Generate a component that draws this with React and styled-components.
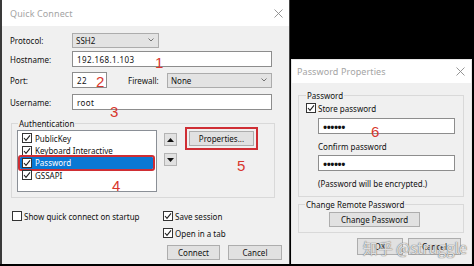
import React from "react";
import styled, { createGlobalStyle } from "styled-components";

const Global = createGlobalStyle`
  html, body { margin: 0; padding: 0; background: #000; }
  body {
    width: 474px; height: 266px; overflow: hidden;
    font-family: "Noto Sans", "Liberation Sans", sans-serif;
    font-size: 8px; color: #111;
  }
  #root { width: 474px; height: 266px; }
`;

const Screen = styled.div`
  position: relative;
  display: flex;
  width: 474px;
  height: 266px;
  background: #000;
  overflow: hidden;
`;

const Window = styled.div`
  position: relative;
  display: flex;
  flex-direction: column;
  box-sizing: border-box;
  flex: none;
  width: ${(p) => p.$w}px;
  height: ${(p) => p.$h}px;
  background: #f0f0f0;
  border-left: ${(p) => p.$bl};
  border-right: ${(p) => p.$br};
  border-top: ${(p) => p.$bt || "none"};
  margin-left: ${(p) => p.$ml || 0}px;
`;

const TitleBar = styled.div`
  display: flex;
  align-items: center;
  justify-content: space-between;
  height: ${(p) => p.$h}px;
  flex: none;
  background: #fff;
  padding: 0 ${(p) => p.$pr}px 0 ${(p) => p.$pl}px;
`;

const Title = styled.span`
  font-size: 9px;
  color: #a4a4a4;
  letter-spacing: 0.1px;
`;

const RightColumn = styled.div`
  display: flex;
  flex-direction: column;
  width: 184px;
  flex: none;
`;

const BlackGap = styled.div`
  height: 59px;
  flex: none;
  background: #000;
`;

const Body = styled.div`
  display: flex;
  flex-direction: column;
  padding: ${(p) => p.$pad};
`;

const FormRow = styled.div`
  display: flex;
  align-items: center;
  height: 16px;
  margin-top: ${(p) => p.$mt || 0}px;
`;

const Label = styled.span`
  display: inline-block;
  width: ${(p) => p.$w || 62}px;
  margin-left: ${(p) => p.$ml || 0}px;
  flex: none;
  white-space: nowrap;
`;

const TextInput = styled.div`
  box-sizing: border-box;
  width: ${(p) => p.$w}px;
  height: ${(p) => p.$h || 16}px;
  margin-left: ${(p) => p.$ml || 0}px;
  margin-top: ${(p) => p.$mt || 0}px;
  flex: none;
  background: #fff;
  border: 1px solid #8d8d8d;
  padding-left: 4px;
  display: flex;
  align-items: center;
  white-space: nowrap;
  font-size: ${(p) => (p.$dots ? "11px" : "8px")};
  font-weight: ${(p) => (p.$dots ? 700 : 400)};
  letter-spacing: ${(p) => (p.$dots ? "-0.5px" : "0.4px")};
`;

const Select = styled.div`
  box-sizing: border-box;
  width: ${(p) => p.$w}px;
  height: 15px;
  flex: none;
  background: #e3e3e3;
  border: 1px solid #acacac;
  display: flex;
  align-items: center;
  justify-content: space-between;
  padding: 0 4px 0 3px;
`;

const Chevron = () => (
  <svg width="6" height="4" viewBox="0 0 6 4">
    <path d="M0.5 0.5 L3 3 L5.5 0.5" fill="none" stroke="#666" strokeWidth="0.9" />
  </svg>
);

const CloseIcon = () => (
  <svg width="9" height="9" viewBox="0 0 9 9">
    <path d="M0.5 0.5 L8.5 8.5 M8.5 0.5 L0.5 8.5" stroke="#8a8a8a" strokeWidth="0.9" />
  </svg>
);

const Group = styled.fieldset`
  box-sizing: border-box;
  width: ${(p) => p.$w}px;
  margin: ${(p) => p.$m};
  padding: ${(p) => p.$pad};
  border: 1px solid #d9d9d9;
  min-width: 0;
`;

const Legend = styled.legend`
  padding: 0 1px;
  margin-left: ${(p) => p.$ml || 0}px;
  line-height: 11px;
  font-size: 8px;
  color: #111;
`;

const GroupContent = styled.div`
  display: flex;
  align-items: flex-start;
`;

const ListBox = styled.div`
  box-sizing: border-box;
  width: 140px;
  height: 62px;
  flex: none;
  background: #fff;
  border: 1px solid #8a8f96;
  padding: 1px 3px 0 2px;
  display: flex;
  flex-direction: column;
`;

const ListItem = styled.div`
  display: flex;
  align-items: center;
  gap: 3px;
  height: 12.4px;
  padding-left: 2px;
  border-radius: 1px;
  background: ${(p) => (p.$selected ? "#0a78d4" : "transparent")};
  color: ${(p) => (p.$selected ? "#fff" : "#111")};
  outline: ${(p) => (p.$selected ? "2px solid #cf2e34" : "none")};
  outline-offset: 0px;
`;

const Box = styled.span`
  box-sizing: border-box;
  width: 10px;
  height: 10px;
  flex: none;
  background: #fff;
  border: 1px solid #333;
  display: inline-flex;
  align-items: center;
  justify-content: center;
`;

const Check = ({ checked = true }) => (
  <Box>
    {checked && (
      <svg width="8" height="8" viewBox="0 0 8 8">
        <path d="M1 4 L3 6.3 L7 1.3" fill="none" stroke="#222" strokeWidth="1.1" />
      </svg>
    )}
  </Box>
);

const ArrowColumn = styled.div`
  display: flex;
  flex-direction: column;
  gap: 7px;
  margin: 3px 0 0 7px;
`;

const ArrowButton = styled.div`
  box-sizing: border-box;
  width: 13px;
  height: 13px;
  background: #e1e1e1;
  border: 1px solid #b4b4b4;
  display: flex;
  align-items: center;
  justify-content: center;
`;

const Triangle = ({ down }) => (
  <svg width="7" height="4" viewBox="0 0 7 4">
    <path d={down ? "M0 0 L7 0 L3.5 4 Z" : "M0 4 L7 4 L3.5 0 Z"} fill="#111" />
  </svg>
);

const Button = styled.div`
  box-sizing: border-box;
  width: ${(p) => p.$w}px;
  height: ${(p) => p.$h || 15}px;
  margin: ${(p) => p.$m || 0};
  flex: none;
  background: #e1e1e1;
  border: 1px solid #adadad;
  display: flex;
  align-items: center;
  justify-content: center;
  white-space: nowrap;
  border-radius: 0;
  outline: ${(p) => (p.$marked ? "2px solid #cf2e34" : "none")};
  outline-offset: ${(p) => (p.$marked ? "2px" : "0")};
`;

const CheckRow = styled.div`
  display: flex;
  align-items: center;
  gap: 2px;
  height: 10px;
  margin-top: ${(p) => p.$mt || 0}px;
  white-space: nowrap;
`;

const Bottom = styled.div`
  display: grid;
  grid-template-columns: 151px 1fr;
  margin: 13px 0 0 2px;
`;

const Stack = styled.div`
  display: flex;
  flex-direction: column;
`;

const ButtonRow = styled.div`
  display: flex;
  gap: ${(p) => p.$gap}px;
  margin: ${(p) => p.$m};
  justify-content: ${(p) => p.$justify || "flex-start"};
`;

const Note = styled.div`
  height: 12px;
  display: flex;
  align-items: center;
  margin-top: ${(p) => p.$mt || 0}px;
  margin-left: ${(p) => p.$ml || 0}px;
  white-space: nowrap;
`;

const Mark = styled.span`
  position: absolute;
  left: ${(p) => p.$x}px;
  top: ${(p) => p.$y}px;
  font-family: "Liberation Sans", "Noto Sans", sans-serif;
  font-size: 15px;
  line-height: 15px;
  color: #d8362d;
  pointer-events: none;
`;

const Watermark = styled.span`
  position: absolute;
  right: 4px;
  bottom: 8px;
  font-family: "Noto Sans CJK SC", "Noto Sans", sans-serif;
  font-size: 15px;
  line-height: 16px;
  color: rgba(255, 255, 255, 0.78);
  text-shadow: 0 0 1px rgba(90, 90, 90, 0.9), 0 0 1px rgba(90, 90, 90, 0.6);
  white-space: nowrap;
  pointer-events: none;
`;

const authItems = [
  { name: "PublicKey" },
  { name: "Keyboard Interactive" },
  { name: "Password", selected: true },
  { name: "GSSAPI" },
];

export default function App() {
  return (
    <>
      <Global />
      <Screen>
        <Window $w={290} $h={264} $bl="2px solid #3a3a3a" $br="1px solid #444">
          <TitleBar $h={26} $pl={8} $pr={6}>
            <Title>Quick Connect</Title>
            <CloseIcon />
          </TitleBar>
          <Body $pad="0 0 0 8px">
            <FormRow $mt={6}>
              <Label>Protocol:</Label>
              <Select $w={87}>
                <span>SSH2</span>
                <Chevron />
              </Select>
            </FormRow>
            <FormRow $mt={3}>
              <Label>Hostname:</Label>
              <TextInput $w={200}>192.168.1.103</TextInput>
            </FormRow>
            <FormRow $mt={5}>
              <Label>Port:</Label>
              <TextInput $w={35}>22</TextInput>
              <Label $w={39} $ml={21}>Firewall:</Label>
              <Select $w={105}>
                <span>None</span>
                <Chevron />
              </Select>
            </FormRow>
            <FormRow $mt={6}>
              <Label>Username:</Label>
              <TextInput $w={200}>root</TextInput>
            </FormRow>

            <Group $w={264} $m="8px 0 0 1px" $pad="1px 6px 5px 5px">
              <Legend $ml={1}>Authentication</Legend>
              <GroupContent>
                <ListBox>
                  {authItems.map((it) => (
                    <ListItem key={it.name} $selected={it.selected}>
                      <Check />
                      <span>{it.name}</span>
                    </ListItem>
                  ))}
                </ListBox>
                <ArrowColumn>
                  <ArrowButton>
                    <Triangle />
                  </ArrowButton>
                  <ArrowButton>
                    <Triangle down />
                  </ArrowButton>
                </ArrowColumn>
                <Button $w={65} $m="1px 0 0 12px" $marked>
                  Properties...
                </Button>
              </GroupContent>
            </Group>

            <Bottom>
              <CheckRow>
                <Check checked={false} />
                <span>Show quick connect on startup</span>
              </CheckRow>
              <Stack>
                <CheckRow>
                  <Check />
                  <span>Save session</span>
                </CheckRow>
                <CheckRow $mt={7}>
                  <Check />
                  <span>Open in a tab</span>
                </CheckRow>
                <ButtonRow $gap={8} $m="7px 0 0 4px">
                  <Button $w={53}>Connect</Button>
                  <Button $w={54}>Cancel</Button>
                </ButtonRow>
              </Stack>
            </Bottom>
          </Body>
        </Window>

        <RightColumn>
          <BlackGap />
          <Window
            $w={181}
            $h={205}
            $ml={1}
            $bl="1px solid #e6e6e6"
            $br="1px solid #e6e6e6"
            $bt="1px solid #e6e6e6"
          >
            <TitleBar $h={23} $pl={5} $pr={6}>
              <Title>Password Properties</Title>
              <CloseIcon />
            </TitleBar>
            <Body $pad="0 0 0 6px">
              <Group $w={166} $m="7px 0 0 0" $pad="2px 6px 7px 7px">
                <Legend $ml={0}>Password</Legend>
                <CheckRow>
                  <Check />
                  <span>Store password</span>
                </CheckRow>
                <TextInput $w={137} $mt={5} $ml={12} $dots>
                  ••••••
                </TextInput>
                <Note $mt={6} $ml={12}>Confirm password</Note>
                <TextInput $w={137} $mt={3} $ml={12} $dots>
                  ••••••
                </TextInput>
                <Note $mt={6} $ml={12}>(Password will be encrypted.)</Note>
              </Group>
              <Group $w={166} $m="2px 0 0 0" $pad="2px 6px 5px 30px">
                <Legend $ml={-24}>Change Remote Password</Legend>
                <Button $w={91}>Change Password</Button>
              </Group>
              <ButtonRow $gap={5} $m="5px 10px 0 0" $justify="flex-end">
                <Button $w={46} $h={17}>OK</Button>
                <Button $w={53} $h={17}>Cancel</Button>
              </ButtonRow>
            </Body>
            <Watermark>知乎 @struggle</Watermark>
          </Window>
        </RightColumn>

        <Mark $x={155} $y={55}>1</Mark>
        <Mark $x={96} $y={74}>2</Mark>
        <Mark $x={110} $y={104}>3</Mark>
        <Mark $x={112} $y={178}>4</Mark>
        <Mark $x={237} $y={158}>5</Mark>
        <Mark $x={371} $y={124}>6</Mark>
      </Screen>
    </>
  );
}
